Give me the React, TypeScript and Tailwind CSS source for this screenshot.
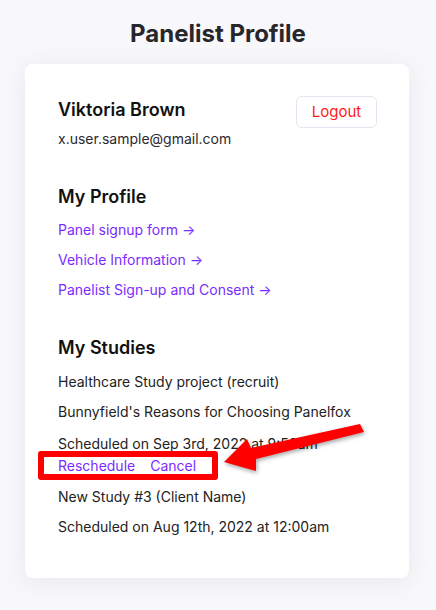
import React from "react";

const profileLinks = [
  "Panel signup form",
  "Vehicle Information",
  "Panelist Sign-up and Consent",
];

const Arrow = () => <span className="ml-1">→</span>;

export default function App() {
  return (
    <div
      className="relative min-h-screen w-full bg-[#f8f7fa] pt-[18px] text-[#1f1f24]"
      style={{ fontFamily: "Inter, 'Noto Sans', sans-serif" }}
    >
      <h1 className="text-center text-[24px] font-bold leading-8 text-[#26262b]">
        Panelist Profile
      </h1>

      <div className="ml-[25px] mt-[14px] w-[384px] rounded-lg bg-white pb-[41px] pl-[33px] pr-[32px] pt-8 shadow-[0_4px_24px_rgba(60,50,90,0.08)]">
        <div className="flex items-start justify-between">
          <div>
            <div className="text-[18px] font-semibold leading-7 text-[#111]">
              Viktoria Brown
            </div>
            <div className="mt-[5px] text-[14px] leading-5 text-[#2a2a30]">
              x.user.sample@gmail.com
            </div>
          </div>
          <button className="h-8 w-[81px] rounded-md border border-[#e6e3f0] bg-white text-[15px] text-[#ff1a1a]">
            Logout
          </button>
        </div>

        <h2 className="mt-[34px] text-[18px] font-semibold leading-7 text-[#111]">
          My Profile
        </h2>
        <div className="mt-[9px] flex flex-col gap-[10px]">
          {profileLinks.map((l) => (
            <a key={l} className="text-[14px] leading-5 text-[#7b2cff]">
              {l}
              <Arrow />
            </a>
          ))}
        </div>

        <h2 className="mt-[34px] text-[18px] font-semibold leading-7 text-[#111]">
          My Studies
        </h2>
        <div className="mt-[10px] flex flex-col text-[14px] leading-5 text-[#222]">
          <div>Healthcare Study project (recruit)</div>
          <div className="mt-[10px]">Bunnyfield's Reasons for Choosing Panelfox</div>
          <div className="mt-[12px]">Scheduled on Sep 3rd, 2022 at 9:50am</div>
          <div className="mt-[2px] flex gap-[15px] text-[#7b2cff]">
            <a>Reschedule</a>
            <a>Cancel</a>
          </div>
          <div className="mt-[11px]">New Study #3 (Client Name)</div>
          <div className="mt-[10px]">Scheduled on Aug 12th, 2022 at 12:00am</div>
        </div>
      </div>

      {/* annotation */}
      <div className="absolute left-[38px] top-[451px] h-[29px] w-[180px] rounded-[3px] border-[6px] border-[#ff0000]" />
      <svg
        className="absolute left-0 top-0"
        width="436"
        height="610"
        style={{ filter: "drop-shadow(1px 2px 2px rgba(0,0,0,0.35))", pointerEvents: "none" }}
      >
        <polygon
          points="224,462 247,439 251,448 360,424 364,432 256,459 256,471"
          fill="#ff0000"
        />
      </svg>
    </div>
  );
}
